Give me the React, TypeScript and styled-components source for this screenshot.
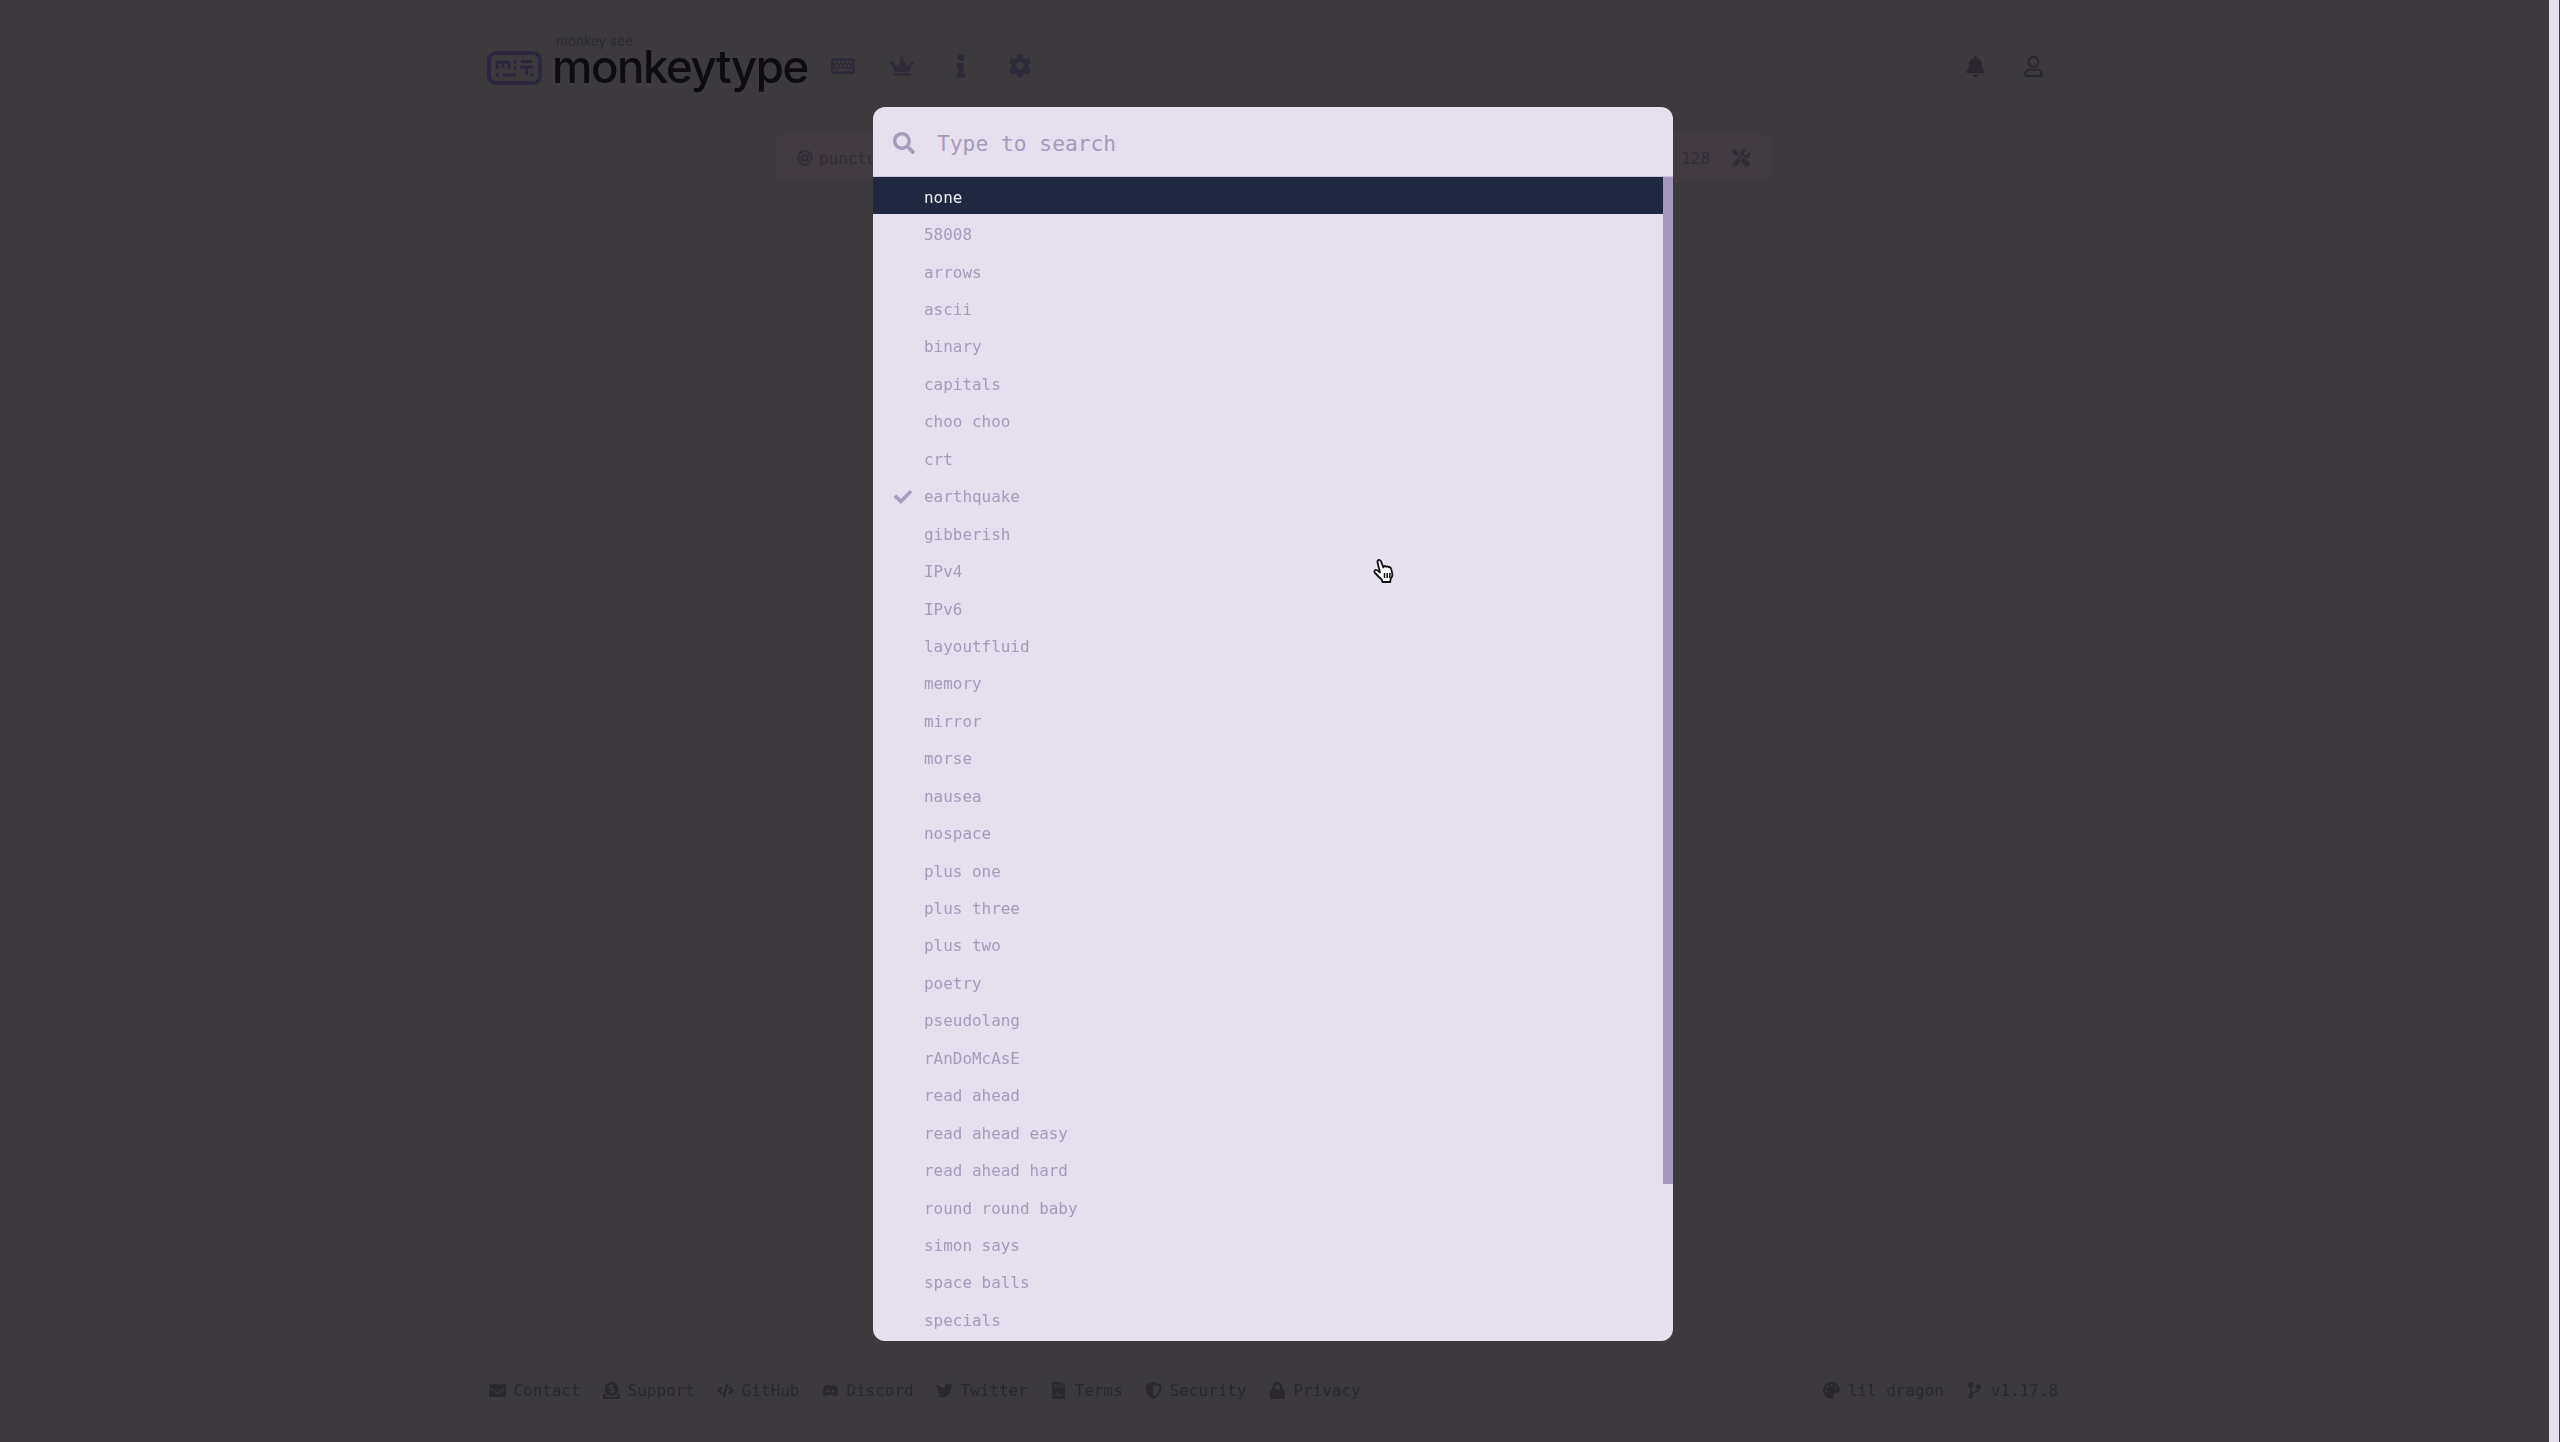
import React from "react";
import styled, { createGlobalStyle } from "styled-components";
import {
  FaSearch, FaCheck, FaKeyboard, FaCrown, FaInfo, FaCog, FaBell, FaRegUser, FaEnvelope, FaDonate,
  FaCode, FaDiscord, FaTwitter, FaFileContract, FaShieldAlt, FaLock, FaPalette, FaCodeBranch, FaAt, FaTools,
} from "react-icons/fa";

const Global = createGlobalStyle`
  html, body { margin: 0; padding: 0; height: 100%; overflow: hidden; background: #3c3a3d; }
  #root { height: 100%; }
  * { box-sizing: border-box; }
`;

const Shell = styled.div`
  position: relative;
  display: flex;
  height: 1442px;
  background: #3c3a3d;
  font-family: "DejaVu Sans Mono", monospace;
`;
const Page = styled.div`
  flex: 1;
  display: flex;
  flex-direction: column;
  padding: 0 489px 0 487px;
  filter: blur(0.6px);
`;
const PageBar = styled.div`
  width: 10px;
  margin-right: 1px;
  background: #e6dfee;
`;
const Header = styled.header`
  height: 134px;
  display: flex;
  align-items: flex-start;
  padding-top: 47px;
`;
const Logo = styled.div`
  display: flex;
  align-items: center;
  height: 40px;
  color: #0e0c12;
`;
const LogoMark = styled.svg`
  width: 55px;
  height: 34px;
  margin-top: 1px;
`;
const Wordmark = styled.div`
  position: relative;
  margin-left: 10px;
  font-family: Inter, sans-serif;
  font-size: 45.5px;
  line-height: 40px;
  letter-spacing: -1.4px;
  font-weight: 500;
  color: #0e0c12;
`;
const Tagline = styled.span`
  position: absolute;
  left: 4px;
  top: -13px;
  font-size: 13.5px;
  line-height: 14px;
  letter-spacing: 0;
  font-weight: 400;
  color: #2d2b30;
`;
const Nav = styled.nav`
  display: flex;
  align-items: center;
  margin-left: 23px;
  height: 38px;
  gap: 35px;
  color: #2e2a39;
  font-size: 24px;
  svg { display: block; }
`;
const NavIcon = styled.span<{ $w: number }>`
  display: flex;
  justify-content: center;
  width: ${(p) => p.$w}px;
`;
const Spacer = styled.div`
  flex: 1;
`;
const UserNav = styled.div`
  display: flex;
  align-items: center;
  height: 38px;
  gap: 37px;
  margin-right: 16px;
  color: #2a2630;
  font-size: 21px;
  svg { display: block; }
`;
const ConfigBar = styled.div`
  align-self: center;
  width: 997px;
  height: 48px;
  border-radius: 10px;
  background: #423b42;
  display: flex;
  align-items: center;
  justify-content: space-between;
  padding: 0 22px;
  color: #322b38;
  font-size: 15.95px;
`;
const ConfigItem = styled.span`
  display: flex;
  align-items: center;
  gap: 6px;
`;
const ConfigEnd = styled(ConfigItem)`
  gap: 22px;
  svg { font-size: 18px; }
`;
const Main = styled.main`
  flex: 1;
`;
const Footer = styled.footer`
  height: 100px;
  display: flex;
  justify-content: space-between;
  padding: 0 2px;
  color: #2a282e;
  font-size: 15.95px;
`;
const FooterGroup = styled.div`
  display: flex;
  gap: 22.5px;
  align-items: center;
  height: 100px;
  padding-bottom: 4px;
`;
const FootLink = styled.span`
  display: flex;
  align-items: center;
  gap: 7.5px;
  svg { display: block; font-size: 17px; }
`;
const Overlay = styled.div`
  position: absolute;
  left: 873px;
  top: 107px;
  width: 800px;
  height: 1234px;
  border-radius: 12px;
  overflow: hidden;
  background: #e6dfee;
  display: flex;
  flex-direction: column;
  color: #a79bbb;
`;
const SearchBar = styled.div`
  flex: none;
  height: 70px;
  display: flex;
  align-items: center;
  padding: 3px 0 0 20px;
  gap: 22px;
  font-size: 21.25px;
  border-bottom: 1px solid #c9c2d8;
  svg { font-size: 22px; display: block; }
`;
const List = styled.div`
  position: relative;
  flex: 1;
  overflow: hidden;
  padding-right: 10px;
`;
const Thumb = styled.div`
  position: absolute;
  top: 0;
  right: 0;
  width: 10px;
  height: 1007px;
  background: #a497bb;
`;
const Row = styled.div<{ $active?: boolean }>`
  height: 37.44px;
  display: flex;
  align-items: center;
  padding-top: 3px;
  font-size: 15.95px;
  background: ${(p) => (p.$active ? "#20283f" : "transparent")};
  color: ${(p) => (p.$active ? "#f2eef7" : "#a79bbb")};
`;
const CheckSlot = styled.span`
  width: 51px;
  flex: none;
  padding-left: 21px;
  svg { display: block; font-size: 18px; }
`;
const Pointer = styled.svg`
  position: absolute;
  left: 1372px;
  top: 558px;
  width: 24px;
  height: 27px;
`;

const rows = ["none","58008","arrows","ascii","binary","capitals","choo choo","crt","earthquake","gibberish","IPv4","IPv6","layoutfluid","memory","mirror","morse","nausea","nospace","plus one","plus three","plus two","poetry","pseudolang","rAnDoMcAsE","read ahead","read ahead easy","read ahead hard","round round baby","simon says","space balls","specials"];

const footerLeft: [React.ReactNode, string][] = [
  [<FaEnvelope />, "Contact"],
  [<FaDonate />, "Support"],
  [<FaCode />, "GitHub"],
  [<FaDiscord />, "Discord"],
  [<FaTwitter />, "Twitter"],
  [<FaFileContract />, "Terms"],
  [<FaShieldAlt />, "Security"],
  [<FaLock />, "Privacy"],
];

export default function App() {
  return (
    <Shell>
      <Global />
      <Page>
        <Header>
          <Logo>
            <LogoMark viewBox="0 0 55 34" fill="none">
              <rect x="2" y="2" width="51" height="30" rx="7" stroke="#2b2540" strokeWidth="3.6" />
              <path d="M10 18v-5a2 2 0 0 1 2-2h8a2 2 0 0 1 2 2v5M16 11v6" stroke="#2b2540" strokeWidth="2.8" />
              <path d="M27 11h2.500M27 17h2.500M34 10.500h11M33 16h13M39.500 16v8M9 24h3M16 24h13M44 24h2.500" stroke="#2b2540" strokeWidth="2.800" />
            </LogoMark>
            <Wordmark>
              <Tagline>monkey see</Tagline>
              monkeytype
            </Wordmark>
          </Logo>
          <Nav>
            <NavIcon $w={24}><FaKeyboard /></NavIcon>
            <NavIcon $w={24}><FaCrown /></NavIcon>
            <NavIcon $w={24}><FaInfo /></NavIcon>
            <NavIcon $w={24}><FaCog /></NavIcon>
          </Nav>
          <Spacer />
          <UserNav>
            <FaBell />
            <FaRegUser />
          </UserNav>
        </Header>
        <ConfigBar>
          <ConfigItem><FaAt /> punctuation</ConfigItem>
          <ConfigEnd>128<FaTools /></ConfigEnd>
        </ConfigBar>
        <Main />
        <Footer>
          <FooterGroup>
            {footerLeft.map(([icon, label]) => (
              <FootLink key={label}>{icon}{label}</FootLink>
            ))}
          </FooterGroup>
          <FooterGroup>
            <FootLink><FaPalette />lil dragon</FootLink>
            <FootLink><FaCodeBranch />v1.17.8</FootLink>
          </FooterGroup>
        </Footer>
      </Page>
      <PageBar />
      <Overlay>
        <SearchBar>
          <FaSearch />
          <span>Type to search</span>
        </SearchBar>
        <List>
          {rows.map((r, i) => (
            <Row key={r} $active={i === 0}>
              <CheckSlot>{r === "earthquake" && <FaCheck />}</CheckSlot>
              {r}
            </Row>
          ))}
          <Thumb />
        </List>
      </Overlay>
      <Pointer viewBox="0 0 24 27">
        <path d="M6 2.500c1-1 2.400-.6 3 .8l2.400 6 .6-1c.8-.6 1.800-.3 2.200.5l.5-.3c.9-.4 1.700 0 2.100.8.9-.4 1.900.2 2.200 1.100l1.300 5.200c.4 2-.4 3.700-1.600 5l-.5 3.400H10.400l-.6-2.400C8 20 5.500 17.500 3 15c-1-1-.8-2.600.4-3 1-.3 2 .2 4.600 2.300L5.600 4.600C5.400 3.800 5.500 3 6 2.500z" fill="#fff" stroke="#111" strokeWidth="1.800" strokeLinejoin="round" />
        <path d="M12.500 15v5M15.200 15v5M17.900 15v5" stroke="#111" strokeWidth="1.500" />
      </Pointer>
    </Shell>
  );
}
